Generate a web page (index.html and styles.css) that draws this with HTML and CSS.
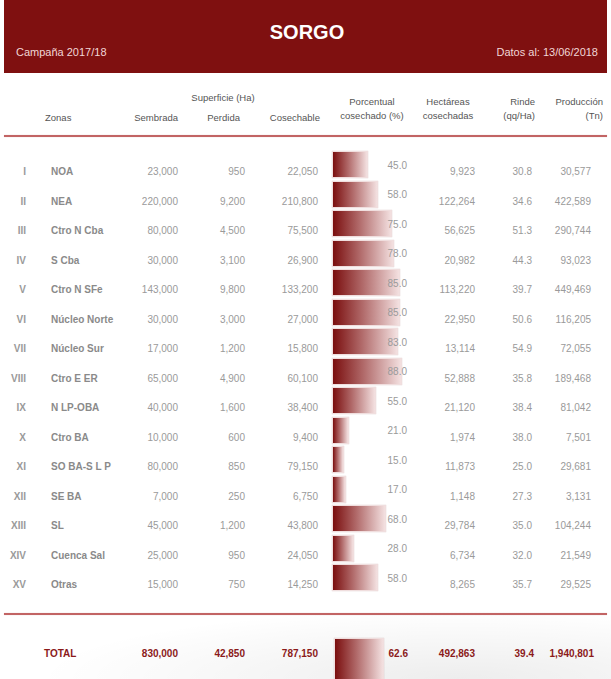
FILE: index.html
```html
<!DOCTYPE html>
<html lang="es">
<head>
<meta charset="utf-8">
<title>Sorgo</title>
<link rel="stylesheet" href="styles.css">
</head>
<body>
<div class="page">
  <header class="band">
    <h1 class="title">SORGO</h1>
    <div class="band-sub">
      <span>Campaña 2017/18</span>
      <span>Datos al: 13/06/2018</span>
    </div>
  </header>

  <div class="head grid">
    <div class="h-zonas">Zonas</div>
    <div class="h-sup">
      <div class="h-sup-title">Superficie (Ha)</div>
      <div class="h-sup-cols">
        <span class="h-semb">Sembrada</span>
        <span class="h-perd">Perdida</span>
        <span class="h-cose">Cosechable</span>
      </div>
    </div>
    <div class="h-pct">Porcentual<br>cosechado (%)</div>
    <div class="h-hect">Hectáreas<br>cosechadas</div>
    <div class="h-rinde">Rinde<br>(qq/Ha)</div>
    <div class="h-prod">Producción<br>(Tn)</div>
  </div>
  <div class="rule"></div>

  <div class="rows">
    <div class="row grid"><span class="rom">I</span><span class="zone">NOA</span><span class="num">23,000</span><span class="num">950</span><span class="num">22,050</span><span class="pct"><span class="bar" style="width:36px"></span><span class="pct-val">45.0</span></span><span class="num">9,923</span><span class="num">30.8</span><span class="num">30,577</span></div>
    <div class="row grid"><span class="rom">II</span><span class="zone">NEA</span><span class="num">220,000</span><span class="num">9,200</span><span class="num">210,800</span><span class="pct"><span class="bar" style="width:46.4px"></span><span class="pct-val">58.0</span></span><span class="num">122,264</span><span class="num">34.6</span><span class="num">422,589</span></div>
    <div class="row grid"><span class="rom">III</span><span class="zone">Ctro N Cba</span><span class="num">80,000</span><span class="num">4,500</span><span class="num">75,500</span><span class="pct"><span class="bar" style="width:60px"></span><span class="pct-val">75.0</span></span><span class="num">56,625</span><span class="num">51.3</span><span class="num">290,744</span></div>
    <div class="row grid"><span class="rom">IV</span><span class="zone">S Cba</span><span class="num">30,000</span><span class="num">3,100</span><span class="num">26,900</span><span class="pct"><span class="bar" style="width:62.4px"></span><span class="pct-val">78.0</span></span><span class="num">20,982</span><span class="num">44.3</span><span class="num">93,023</span></div>
    <div class="row grid"><span class="rom">V</span><span class="zone">Ctro N SFe</span><span class="num">143,000</span><span class="num">9,800</span><span class="num">133,200</span><span class="pct"><span class="bar" style="width:68px"></span><span class="pct-val">85.0</span></span><span class="num">113,220</span><span class="num">39.7</span><span class="num">449,469</span></div>
    <div class="row grid"><span class="rom">VI</span><span class="zone">Núcleo Norte</span><span class="num">30,000</span><span class="num">3,000</span><span class="num">27,000</span><span class="pct"><span class="bar" style="width:68px"></span><span class="pct-val">85.0</span></span><span class="num">22,950</span><span class="num">50.6</span><span class="num">116,205</span></div>
    <div class="row grid"><span class="rom">VII</span><span class="zone">Núcleo Sur</span><span class="num">17,000</span><span class="num">1,200</span><span class="num">15,800</span><span class="pct"><span class="bar" style="width:66.4px"></span><span class="pct-val">83.0</span></span><span class="num">13,114</span><span class="num">54.9</span><span class="num">72,055</span></div>
    <div class="row grid"><span class="rom">VIII</span><span class="zone">Ctro E ER</span><span class="num">65,000</span><span class="num">4,900</span><span class="num">60,100</span><span class="pct"><span class="bar" style="width:70.4px"></span><span class="pct-val">88.0</span></span><span class="num">52,888</span><span class="num">35.8</span><span class="num">189,468</span></div>
    <div class="row grid"><span class="rom">IX</span><span class="zone">N LP-OBA</span><span class="num">40,000</span><span class="num">1,600</span><span class="num">38,400</span><span class="pct"><span class="bar" style="width:44px"></span><span class="pct-val">55.0</span></span><span class="num">21,120</span><span class="num">38.4</span><span class="num">81,042</span></div>
    <div class="row grid"><span class="rom">X</span><span class="zone">Ctro BA</span><span class="num">10,000</span><span class="num">600</span><span class="num">9,400</span><span class="pct"><span class="bar" style="width:16.8px"></span><span class="pct-val">21.0</span></span><span class="num">1,974</span><span class="num">38.0</span><span class="num">7,501</span></div>
    <div class="row grid"><span class="rom">XI</span><span class="zone">SO BA-S L P</span><span class="num">80,000</span><span class="num">850</span><span class="num">79,150</span><span class="pct"><span class="bar" style="width:12px"></span><span class="pct-val">15.0</span></span><span class="num">11,873</span><span class="num">25.0</span><span class="num">29,681</span></div>
    <div class="row grid"><span class="rom">XII</span><span class="zone">SE BA</span><span class="num">7,000</span><span class="num">250</span><span class="num">6,750</span><span class="pct"><span class="bar" style="width:13.6px"></span><span class="pct-val">17.0</span></span><span class="num">1,148</span><span class="num">27.3</span><span class="num">3,131</span></div>
    <div class="row grid"><span class="rom">XIII</span><span class="zone">SL</span><span class="num">45,000</span><span class="num">1,200</span><span class="num">43,800</span><span class="pct"><span class="bar" style="width:54.4px"></span><span class="pct-val">68.0</span></span><span class="num">29,784</span><span class="num">35.0</span><span class="num">104,244</span></div>
    <div class="row grid"><span class="rom">XIV</span><span class="zone">Cuenca Sal</span><span class="num">25,000</span><span class="num">950</span><span class="num">24,050</span><span class="pct"><span class="bar" style="width:22.4px"></span><span class="pct-val">28.0</span></span><span class="num">6,734</span><span class="num">32.0</span><span class="num">21,549</span></div>
    <div class="row grid"><span class="rom">XV</span><span class="zone">Otras</span><span class="num">15,000</span><span class="num">750</span><span class="num">14,250</span><span class="pct"><span class="bar" style="width:46.4px"></span><span class="pct-val">58.0</span></span><span class="num">8,265</span><span class="num">35.7</span><span class="num">29,525</span></div>
  </div>

  <div class="rule rule-total"></div>

  <div class="total grid">
    <span class="rom"></span><span class="t-label">TOTAL</span><span class="t-num">830,000</span><span class="t-num">42,850</span><span class="t-num">787,150</span><span class="pct t-pct"><span class="bar bar-total" style="width:50px"></span><span class="t-num t-pct-val">62.6</span></span><span class="t-num">492,863</span><span class="t-num t-rinde">39.4</span><span class="t-num t-prod">1,940,801</span>
  </div>
</div>
</body>
</html>
```

FILE: styles.css
```css
html, body {
  margin: 0;
  padding: 0;
}
body {
  background: #ffffff;
  font-family: "Liberation Sans", Arial, sans-serif;
  width: 611px;
  height: 679px;
  overflow: hidden;
  background-image: radial-gradient(ellipse 420px 70px at 75% 100%, rgba(0,0,0,0.07), rgba(0,0,0,0) 100%);
}
.page {
  margin: 0 4px;
  width: 603px;
}
.band {
  background: #7f1010;
  height: 73px;
  padding: 20px 9px 0 12px;
  box-sizing: border-box;
  color: #fff;
}
.title {
  margin: 0;
  text-align: center;
  font-size: 20px;
  line-height: 24px;
  font-weight: bold;
  color: #ffffff;
}
.band-sub {
  display: flex;
  justify-content: space-between;
  font-size: 11px;
  line-height: 13px;
  margin-top: 1.5px;
  color: #f1d6d6;
}
.grid {
  display: grid;
  grid-template-columns: 40px 76px 58px 67px 73px 90px 67px 57px 59px 16px;
}
.head {
  height: 62px;
  align-items: end;
  padding-bottom: 10.5px;
  box-sizing: border-box;
  font-size: 9.5px;
  line-height: 14px;
  color: #555;
}
.h-zonas {
  grid-column: 2;
  padding-left: 1px;
  padding-bottom: 0;
}
.h-sup {
  grid-column: 3 / 6;
  display: flex;
  flex-direction: column;
}
.h-sup-title {
  text-align: center;
  padding-left: 8px;
  margin-bottom: 6px;
}
.h-sup-cols {
  display: grid;
  grid-template-columns: 58px 67px 73px;
}
.h-semb { text-align: right; }
.h-perd { text-align: right; padding-right: 5px; }
.h-cose { text-align: right; margin-right: -2px; }
.h-pct {
  grid-column: 6;
  text-align: center;
  padding-left: 18px;
  padding-bottom: 1.5px;
}
.h-hect {
  grid-column: 7;
  text-align: center;
  padding-left: 13px;
  padding-bottom: 1.5px;
}
.h-rinde {
  grid-column: 8;
  text-align: right;
  margin-right: -3px;
  padding-bottom: 1.5px;
}
.h-prod {
  grid-column: 9 / 11;
  text-align: right;
  padding-right: 4px;
  padding-bottom: 1.5px;
}
.rule {
  height: 2px;
  background: #c26464;
  box-shadow: 0 0 1px rgba(194,100,100,0.5);
}
.rows {
  padding-top: 12.5px;
}
.row {
  height: 29.5px;
  font-size: 10px;
  line-height: 12px;
  color: #9a9a9a;
}
.row > span {
  padding-top: 16.5px;
}
.rom {
  text-align: right;
  padding-right: 18px;
  font-weight: bold;
  color: #9a9a9a;
}
.zone {
  padding-left: 7px;
  font-weight: bold;
  color: #8a8a8a;
  white-space: nowrap;
}
.num {
  text-align: right;
}
.row > .pct {
  padding-top: 0;
}
.pct {
  display: grid;
  grid-template-columns: 1fr;
  grid-template-rows: auto;
}
.bar {
  grid-area: 1 / 1;
  justify-self: start;
  margin-left: 14px;
  margin-top: 1.5px;
  height: 27px;
  box-sizing: border-box;
  background: linear-gradient(to right, #7a0e0e 0%, #b16a6a 45%, #f3e0e0 100%);
  border: 1px solid #f0dede;
  box-shadow: 0 0 1px rgba(150,80,80,0.35);
}
.pct-val {
  grid-area: 1 / 1;
  justify-self: end;
  padding-right: 1px;
  padding-top: 10px;
  position: relative;
}
.rule-total {
  margin-top: 20.5px;
}
.total {
  padding-top: 23px;
  font-size: 10px;
  line-height: 12px;
  font-weight: bold;
  color: #8b1a1a;
  align-items: start;
}
.total > span {
  margin-top: 10px;
}
.total > .pct {
  margin-top: 0;
}
.t-label {
  color: #8b1a1a;
}
.t-num {
  text-align: right;
}
.bar-total {
  margin-top: 0;
  margin-left: 16px;
  height: 56px;
}
.t-pct-val {
  grid-area: 1 / 1;
  justify-self: end;
  margin-top: 10px;
}
.t-rinde {
  margin-right: -2px;
}
.t-prod {
  grid-column: 9 / 11;
  padding-right: 13px;
}
```
